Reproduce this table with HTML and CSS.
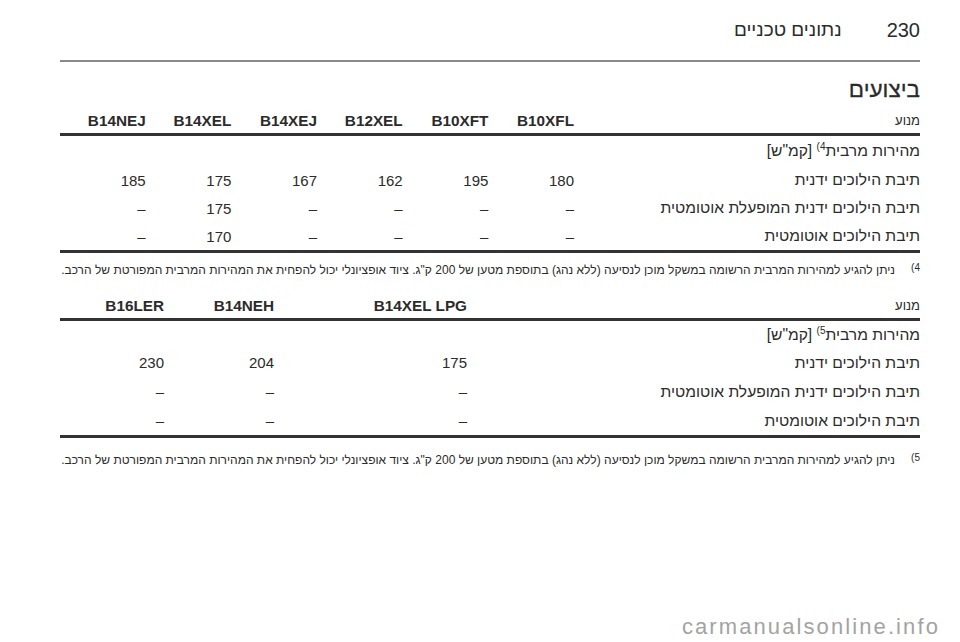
FILE: index.html
```html
<!DOCTYPE html>
<html lang="he" dir="rtl">
<head>
<meta charset="utf-8">
<link rel="stylesheet" href="styles.css">
</head>
<body>
<div class="page">
  <header class="top">
    <span class="pnum">230</span>
    <span class="ptitle">נתונים טכניים</span>
  </header>
  <h1 class="section">ביצועים</h1>

  <div class="tbl t1">
    <div class="row head">
      <span class="lbl">מנוע</span>
      <span>B10XFL</span><span>B10XFT</span><span>B12XEL</span><span>B14XEJ</span><span>B14XEL</span><span>B14NEJ</span>
    </div>
    <div class="row first">
      <span class="lbl">מהירות מרבית<sup>4)</sup> [קמ"ש]</span>
    </div>
    <div class="row">
      <span class="lbl">תיבת הילוכים ידנית</span>
      <span>180</span><span>195</span><span>162</span><span>167</span><span>175</span><span>185</span>
    </div>
    <div class="row">
      <span class="lbl">תיבת הילוכים ידנית המופעלת אוטומטית</span>
      <span>–</span><span>–</span><span>–</span><span>–</span><span>175</span><span>–</span>
    </div>
    <div class="row">
      <span class="lbl">תיבת הילוכים אוטומטית</span>
      <span>–</span><span>–</span><span>–</span><span>–</span><span>170</span><span>–</span>
    </div>
  </div>
  <p class="note"><span class="mark">4)</span><span class="ntext">ניתן להגיע למהירות המרבית הרשומה במשקל מוכן לנסיעה (ללא נהג) בתוספת מטען של 200 ק"ג. ציוד אופציונלי יכול להפחית את המהירות המרבית המפורטת של הרכב.</span></p>

  <div class="tbl t2">
    <div class="row head">
      <span class="lbl">מנוע</span>
      <span>B14XEL LPG</span><span>B14NEH</span><span>B16LER</span>
    </div>
    <div class="row first">
      <span class="lbl">מהירות מרבית<sup>5)</sup> [קמ"ש]</span>
    </div>
    <div class="row">
      <span class="lbl">תיבת הילוכים ידנית</span>
      <span>175</span><span>204</span><span>230</span>
    </div>
    <div class="row">
      <span class="lbl">תיבת הילוכים ידנית המופעלת אוטומטית</span>
      <span>–</span><span>–</span><span>–</span>
    </div>
    <div class="row">
      <span class="lbl">תיבת הילוכים אוטומטית</span>
      <span>–</span><span>–</span><span>–</span>
    </div>
  </div>
  <p class="note n2"><span class="mark">5)</span><span class="ntext">ניתן להגיע למהירות המרבית הרשומה במשקל מוכן לנסיעה (ללא נהג) בתוספת מטען של 200 ק"ג. ציוד אופציונלי יכול להפחית את המהירות המרבית המפורטת של הרכב.</span></p>
</div>
<div class="watermark" dir="ltr">carmanualsonline.info</div>
</body>
</html>
```

FILE: styles.css
```css
html, body {
  margin: 0;
  padding: 0;
  background: #fff;
}
body {
  width: 960px;
  height: 642px;
  position: relative;
  overflow: hidden;
  font-family: "Liberation Sans", Arial, sans-serif;
  color: #2b2b2b;
  direction: rtl;
}
.page {
  padding: 0 40px 0 60px;
}
.top {
  height: 60px;
  display: flex;
  align-items: center;
  gap: 45px;
  border-bottom: 2px solid #8a8a8a;
  font-size: 20px;
}
.ptitle {
  font-size: 19px;
}
.section {
  margin: 16px 0 0 0;
  font-size: 22.5px;
  font-weight: normal;
  line-height: 24px;
  -webkit-text-stroke: 0.3px #2b2b2b;
}
.tbl {
  margin-top: 6px;
}
.row {
  display: grid;
  height: 28px;
  align-items: center;
  font-size: 15px;
}
.row .lbl {
  font-size: 15.6px;
}
.t1 .row {
  grid-template-columns: 346px repeat(6, 1fr);
}
.t2 .row {
  grid-template-columns: 453px 193px 110px 1fr;
}
.row.head {
  height: 25px;
  font-weight: bold;
  font-size: 15.3px;
  border-bottom: 3px solid #333;
}
.row.head .lbl {
  font-weight: normal;
  font-size: 13px;
}
.row.first {
  height: 30px;
}
.tbl .row:last-child {
  border-bottom: 3px solid #333;
}
.t2 .row.first {
  height: 27px;
}
.t2 .row:nth-child(3),
.t2 .row:nth-child(4),
.t2 .row:nth-child(5) {
  height: 29px;
}
.row sup {
  font-size: 10px;
  line-height: 0;
  vertical-align: 6px;
}
.note {
  display: flex;
  margin: 9px 0 0 0;
  font-size: 12px;
  line-height: 16px;
}
.note .mark {
  width: 25px;
  flex: none;
  font-size: 10px;
  line-height: 12px;
  align-self: flex-start;
}
.tbl.t2 {
  margin-top: 15px;
}
.note.n2 {
  margin-top: 14px;
}
.watermark {
  position: absolute;
  right: 20px;
  top: 614px;
  font-family: "Liberation Sans", Arial, sans-serif;
  font-size: 22px;
  letter-spacing: 2.1px;
  color: #a3a3a3;
  direction: ltr;
}
```
